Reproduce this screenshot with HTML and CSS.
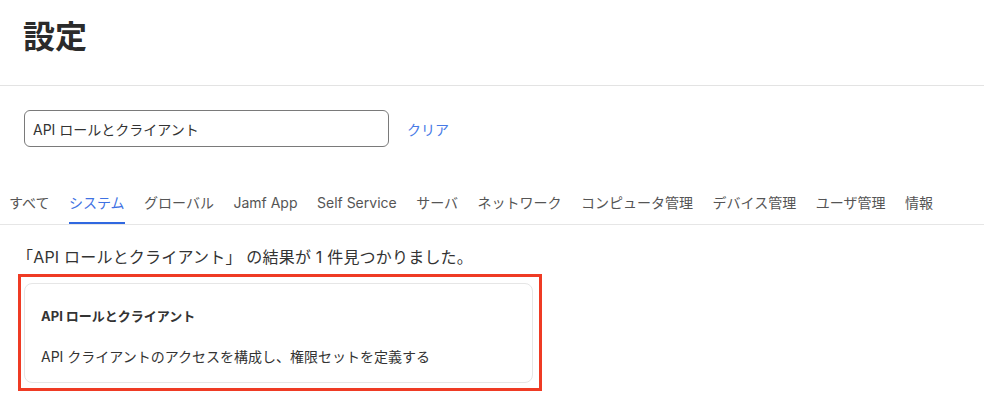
FILE: index.html
```html
<!DOCTYPE html>
<html lang="ja">
<head>
    <meta charset="UTF-8">
    <meta name="viewport" content="width=device-width, initial-scale=1.0">
    <title>設定</title>
    <link rel="stylesheet" href="styles.css">
</head>
<body>

    <header class="page-header">
        <h1>設定</h1>
    </header>

    <div class="search-row">
        <input type="text" class="search-input" value="API ロールとクライアント">
        <a href="#" class="clear-link">クリア</a>
    </div>

    <nav class="tabs">
        <a href="#" class="tab">すべて</a>
        <a href="#" class="tab active">システム</a>
        <a href="#" class="tab">グローバル</a>
        <a href="#" class="tab">Jamf App</a>
        <a href="#" class="tab">Self Service</a>
        <a href="#" class="tab">サーバ</a>
        <a href="#" class="tab">ネットワーク</a>
        <a href="#" class="tab">コンピュータ管理</a>
        <a href="#" class="tab">デバイス管理</a>
        <a href="#" class="tab">ユーザ管理</a>
        <a href="#" class="tab">情報</a>
    </nav>

    <p class="result-count">「API ロールとクライアント」 の結果が 1 件見つかりました。</p>

    <div class="highlight">
        <div class="result-card">
            <h3>API ロールとクライアント</h3>
            <p>API クライアントのアクセスを構成し、権限セットを定義する</p>
        </div>
    </div>

</body>
</html>
```

FILE: styles.css
```css
body {
    font-family: Inter, "Noto Sans CJK JP", sans-serif;
    background-color: #fff;
    color: #333;
    margin: 0;
    padding: 0;
}
.page-header {
    height: 85px;
    border-bottom: 1px solid #e3e3e3;
    padding-left: 23px;
}
.page-header h1 {
    margin: 0;
    padding-top: 17px;
    font-size: 32px;
    line-height: 40px;
    font-weight: bold;
    color: #2b2b2b;
}
.search-row {
    display: flex;
    align-items: center;
    margin-top: 24px;
    padding-left: 24px;
}
.search-input {
    box-sizing: border-box;
    width: 365px;
    height: 37px;
    padding: 0 8px;
    border: 1px solid #7a7a7a;
    border-radius: 6px;
    font-family: inherit;
    font-size: 14px;
    color: #333;
}
.clear-link {
    margin-left: 18px;
    font-size: 14px;
    color: #4679e6;
    text-decoration: none;
}
.tabs {
    display: flex;
    gap: 19.5px;
    margin-top: 46px;
    padding-left: 9px;
    border-bottom: 1px solid #e6e6e6;
}
.tab {
    font-size: 14px;
    line-height: 20px;
    padding-bottom: 9px;
    border-bottom: 2px solid transparent;
    color: #555;
    text-decoration: none;
    white-space: nowrap;
}
.tab.active {
    color: #3f72e3;
    border-bottom-color: #3068e0;
}
.result-count {
    margin: 21px 0 0;
    padding-left: 17px;
    font-size: 16px;
    line-height: 22px;
    letter-spacing: 0.2px;
    color: #333;
}
.highlight {
    box-sizing: border-box;
    width: 524px;
    margin: 6px 0 0 18px;
    padding: 6px 6px 5px 3px;
    border: 3px solid #ef3b24;
}
.result-card {
    border: 1px solid #e6e6e6;
    border-radius: 8px;
    padding: 23px 16px 15px;
}
.result-card h3 {
    margin: 0;
    font-size: 13px;
    line-height: 18px;
    font-weight: bold;
    color: #333;
}
.result-card p {
    margin: 22px 0 0;
    font-size: 14px;
    line-height: 20px;
    color: #333;
}
```
